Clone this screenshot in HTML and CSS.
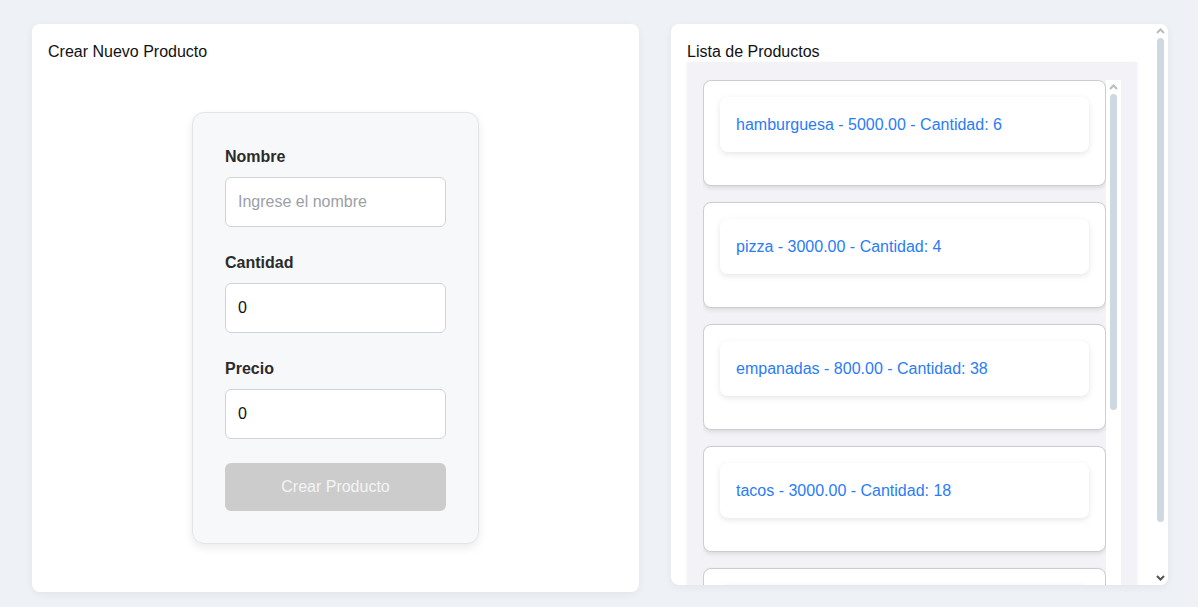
FILE: index.html
```html
<!DOCTYPE html>
<html lang="es">
<head>
<meta charset="utf-8">
<title>Productos</title>
<link rel="stylesheet" href="styles.css">
</head>
<body>
<div class="page">
  <section class="card create-card">
    <h2 class="card-title">Crear Nuevo Producto</h2>
    <form class="form-box">
      <div class="field">
        <label class="field-label">Nombre</label>
        <input class="field-input" type="text" placeholder="Ingrese el nombre">
      </div>
      <div class="field">
        <label class="field-label">Cantidad</label>
        <input class="field-input" type="number" value="0">
      </div>
      <div class="field">
        <label class="field-label">Precio</label>
        <input class="field-input" type="number" value="0">
      </div>
      <button class="submit-btn" type="button" disabled>Crear Producto</button>
    </form>
  </section>
  <section class="card list-card">
    <div class="list-main">
      <h2 class="card-title">Lista de Productos</h2>
      <div class="list-wrap">
        <div class="list-scroll">
          <div class="list-items">
            <div class="item"><div class="item-inner">hamburguesa - 5000.00 - Cantidad: 6</div></div>
            <div class="item"><div class="item-inner">pizza - 3000.00 - Cantidad: 4</div></div>
            <div class="item"><div class="item-inner">empanadas - 800.00 - Cantidad: 38</div></div>
            <div class="item"><div class="item-inner">tacos - 3000.00 - Cantidad: 18</div></div>
            <div class="item"><div class="item-inner">sushi - 4500.00 - Cantidad: 10</div></div>
          </div>
          <div class="vscroll">
            <div class="vscroll-btn">
              <svg width="9" height="6" viewBox="0 0 9 6"><polyline points="1,5 4.5,1.5 8,5" fill="none" stroke="#b9bcc0" stroke-width="2"/></svg>
            </div>
            <div class="vscroll-track">
              <div class="vscroll-thumb" style="height:316px"></div>
            </div>
          </div>
        </div>
      </div>
    </div>
    <div class="vscroll">
      <div class="vscroll-btn">
        <svg width="9" height="6" viewBox="0 0 9 6"><polyline points="1,5 4.5,1.5 8,5" fill="none" stroke="#b9bcc0" stroke-width="2"/></svg>
      </div>
      <div class="vscroll-track">
        <div class="vscroll-thumb" style="height:484px"></div>
      </div>
      <div class="vscroll-btn">
        <svg width="9" height="6" viewBox="0 0 9 6"><polyline points="1,1 4.5,4.5 8,1" fill="none" stroke="#505458" stroke-width="2"/></svg>
      </div>
    </div>
  </section>
</div>
</body>
</html>
```
FILE: styles.css
```css
* { box-sizing: border-box; }
html, body { margin: 0; padding: 0; }
body {
  background: #eef1f5;
  font-family: "Liberation Sans", Arial, sans-serif;
  color: #111;
  height: 607px;
  overflow: hidden;
}
.page {
  display: grid;
  grid-template-columns: 607px 497px;
  column-gap: 32px;
  align-items: start;
  padding: 24px 32px;
}
.card {
  background: #fff;
  border-radius: 8px;
  box-shadow: 0 2px 8px rgba(0,0,0,0.06);
}
.card-title {
  margin: 0;
  font-size: 16px;
  font-weight: normal;
  line-height: 20px;
  color: #111;
}
.create-card {
  height: 568px;
  padding: 18px 16px 16px;
  display: flex;
  flex-direction: column;
  align-items: center;
}
.create-card .card-title { align-self: flex-start; }
.form-box {
  margin-top: 50px;
  width: 287px;
  background: #f7f8fa;
  border: 1px solid #e2e4e8;
  border-radius: 12px;
  box-shadow: 0 4px 10px rgba(0,0,0,0.08);
  padding: 34px 32px 32px;
  display: flex;
  flex-direction: column;
}
.field { display: flex; flex-direction: column; margin-bottom: 26px; }
.field-label {
  font-weight: bold;
  font-size: 16px;
  line-height: 20px;
  color: #2b2b2b;
  margin-bottom: 10px;
}
.field-input {
  height: 50px;
  width: 100%;
  border: 1px solid #cfd4da;
  border-radius: 6px;
  background: #fff;
  padding: 0 12px;
  font-family: "Liberation Sans", Arial, sans-serif;
  font-size: 16px;
  color: #111;
  outline: none;
}
.field-input::placeholder { color: #9ca0a6; }
.field-input::-webkit-outer-spin-button,
.field-input::-webkit-inner-spin-button { -webkit-appearance: none; margin: 0; }
.submit-btn {
  margin-top: -2px;
  height: 48px;
  border: none;
  border-radius: 6px;
  background: #cccccc;
  color: #f4f4f4;
  font-family: "Liberation Sans", Arial, sans-serif;
  font-size: 16px;
}
.list-card {
  height: 561px;
  overflow: hidden;
  display: flex;
}
.list-main {
  flex: 1;
  min-width: 0;
  padding: 18px 16px 16px;
}
.list-wrap {
  background: #f3f3f7;
  padding: 18px 16px 16px;
  box-shadow: 0 1px 4px rgba(0,0,0,0.05);
}
.list-scroll {
  height: 532px;
  display: flex;
}
.list-items {
  flex: 1;
  min-width: 0;
  overflow: hidden;
  display: flex;
  flex-direction: column;
  gap: 16px;
}
.item {
  flex: none;
  background: #fff;
  border: 1px solid #cdcdd0;
  border-radius: 8px;
  box-shadow: 0 2px 4px rgba(0,0,0,0.1);
  padding: 16px 16px 33px;
}
.item-inner {
  background: #fff;
  border-radius: 8px;
  box-shadow: 0 2px 6px rgba(0,0,0,0.1);
  padding: 18px 16px;
  font-size: 16px;
  line-height: 19px;
  color: #2a7cf6;
}
.vscroll {
  flex: none;
  width: 15px;
  background: #fff;
  display: flex;
  flex-direction: column;
  align-items: center;
}
.vscroll-btn {
  flex: none;
  height: 14px;
  width: 15px;
  display: flex;
  align-items: center;
  justify-content: center;
}
.vscroll-btn svg { display: block; }
.vscroll-track {
  flex: 1;
  width: 100%;
  display: flex;
  flex-direction: column;
  align-items: center;
}
.vscroll-thumb {
  width: 7px;
  border-radius: 4px;
  background: #cdd8e2;
}
```
